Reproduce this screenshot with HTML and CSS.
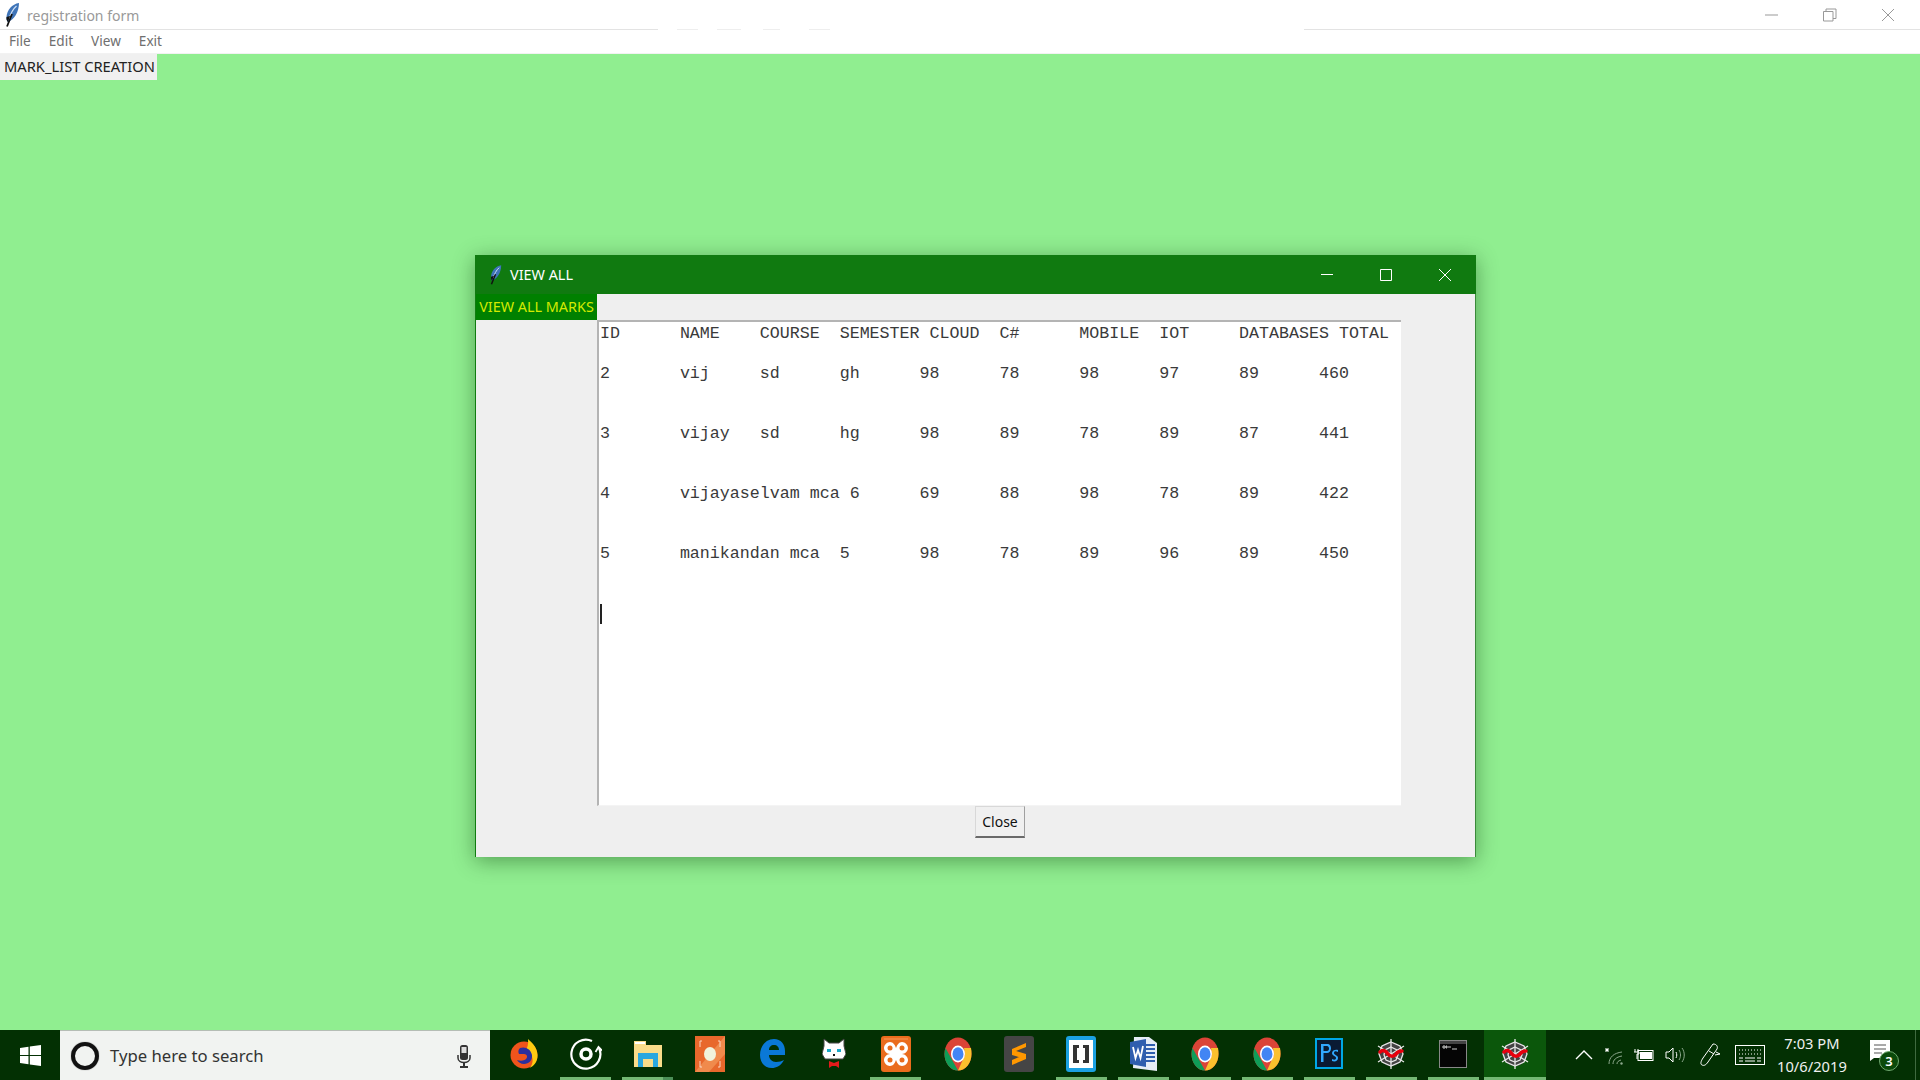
FILE: index.html
```html
<!DOCTYPE html>
<html lang="en">
<head>
<meta charset="utf-8">
<title>registration form</title>
<link rel="stylesheet" href="styles.css">
</head>
<body>
<svg class="defs" width="0" height="0" aria-hidden="true">
  <defs>
    <symbol id="feather" viewBox="0 0 16 24">
      <path d="M15 0C8 1 3 7 2.500 14c-.2 2 .2 3.500 1.200 5C10 17 15 9 15 0z" fill="#3f74b8"/>
      <path d="M12.500 3C9 6 6.500 11 5 16" stroke="#cfe0f5" stroke-width="1.200" fill="none"/>
      <path d="M8 11 3 23.500" stroke="#111" stroke-width="1.800" fill="none"/>
      <path d="M2.500 14c-.2 2 .2 3.500 1.200 5l2.500-6z" fill="#111"/>
    </symbol>
    <symbol id="chrome" viewBox="0 0 28 34">
      <ellipse cx="14" cy="17" rx="13.500" ry="16.500" fill="#db4437"/>
      <path d="M1.500 11 14 33.500c-7.500 0-13.500-7.500-13.500-16.500 0-2 .4-4 1-6z" fill="#0f9d58"/>
      <path d="M27 11c.4 2 .5 4 .5 6 0 9-6 16.500-13.500 16.500L21 18l-1-7z" fill="#fbc02d"/>
      <ellipse cx="14" cy="17" rx="7" ry="8.500" fill="#fff"/>
      <ellipse cx="14" cy="17" rx="5.500" ry="6.800" fill="#4285f4"/>
    </symbol>
    <symbol id="spider" viewBox="0 0 30 32">
      <circle cx="15" cy="16" r="12" fill="#444"/>
      <g stroke="#e8e8e8" stroke-width="1.300" fill="none">
        <path d="M15 1v30M2 8l26 16M28 8 2 24"/>
        <path d="M15 4l9 4 3 8-3 8-9 4-9-4-3-8 3-8z"/>
        <path d="M15 9l6 3 1 5-2 5-5 2-5-2-2-5 1-5z"/>
      </g>
      <path d="M4 14c3-3 6-1 8 2s6 3 8 0 4-3 6-3" stroke="#e8000d" stroke-width="3.500" fill="none" stroke-linecap="round"/>
    </symbol>
  </defs>
</svg>

<div class="app-title">
  <svg class="app-feather"><use href="#feather"/></svg>
  <span class="app-name">registration form</span>
  <div class="app-controls">
    <svg class="ctl" viewBox="0 0 14 14"><path d="M0 7h13" stroke="#999" fill="none"/></svg>
    <svg class="ctl" viewBox="0 0 14 14"><path d="M.5 3.500h9.500v9.500H.5zM3 3.500V1h10v9.500h-3" stroke="#999" fill="none"/></svg>
    <svg class="ctl" viewBox="0 0 14 14"><path d="M1 1l12 12M13 1 1 13" stroke="#999" fill="none"/></svg>
  </div>
</div>
<nav class="menu">
  <span class="m-file">File</span><span class="m-edit">Edit</span><span class="m-view">View</span><span class="m-exit">Exit</span>
</nav>

<main class="desktop">
  <div class="main-label">MARK_LIST CREATION</div>

  <section class="window">
    <header class="win-title">
      <svg class="win-feather"><use href="#feather"/></svg>
      <span class="win-name">VIEW ALL</span>
      <div class="win-controls">
        <svg class="ctl" viewBox="0 0 14 14"><path d="M1 6.500h12" stroke="#fff" fill="none"/></svg>
        <svg class="ctl" viewBox="0 0 14 14"><path d="M1.500 1.500h11v11h-11z" stroke="#fff" fill="none"/></svg>
        <svg class="ctl" viewBox="0 0 14 14"><path d="M1 1l12 12M13 1 1 13" stroke="#fff" fill="none"/></svg>
      </div>
    </header>
    <div class="win-body">
      <div class="label-row"><div class="view-label">VIEW ALL MARKS</div></div>
      <div class="text-box">
<pre class="marks">ID      NAME    COURSE  SEMESTER CLOUD  C#      MOBILE  IOT     DATABASES TOTAL

2       vij     sd      gh      98      78      98      97      89      460


3       vijay   sd      hg      98      89      78      89      87      441


4       vijayaselvam mca 6      69      88      98      78      89      422


5       manikandan mca  5       98      78      89      96      89      450


<span class="caret"></span></pre>
      </div>
      <div class="btn-row"><button class="close-btn">Close</button></div>
    </div>
  </section>
</main>

<footer class="taskbar">
  <div class="start">
    <svg width="21" height="21" viewBox="0 0 21 21"><path d="M0 3l8.500-1.200V10H0zM9.800 1.600 21 0v10H9.800zM0 11h8.500v8.200L0 18zM9.800 11H21v10L9.800 19.400z" fill="#fff"/></svg>
  </div>
  <div class="search">
    <span class="cortana"></span>
    <span class="search-text">Type here to search</span>
    <svg class="mic" width="14" height="24" viewBox="0 0 14 24"><rect x="3" y="1" width="8" height="15" rx="2.500" fill="#333"/><rect x="4.500" y="3" width="5" height="6" fill="#ddd"/><path d="M1 11v3c0 3 3 4.500 6 4.500s6-1.500 6-4.500v-3" stroke="#333" stroke-width="1.500" fill="none"/><path d="M7 18v4M3 23h8" stroke="#333" stroke-width="2"/></svg>
  </div>
  <div class="tasks">
    <div class="task">
      <svg width="28" height="32" viewBox="0 0 28 32"><circle cx="14" cy="17" r="13.500" fill="#f0541c"/><path d="M18 1c3 3 9 7 9.500 16 .3 6-3 11-8 13 4-4 4-10 1-14-1-2-3-3-5-3 2-3 3-7 2.500-12z" fill="#ffcb12"/><path d="M10 10c5-2 11 1 12 7 .7 5-3 9-8 9-3 0-6-2-7-4 3 1 7 1 9-1s1-5-2-5H9c-1-2-1-4 1-6z" fill="#2b2f9e"/></svg>
    </div>
    <div class="task on">
      <svg width="32" height="32" viewBox="0 0 32 32" fill="none" stroke="#fff"><path d="M29 10a14.500 14.500 0 1 1-7-7" stroke-width="2.200"/><path d="M25.500 14l3-5 3.500 3.500" stroke-width="1.800"/><circle cx="16" cy="16" r="5" stroke-width="3.500"/></svg>
    </div>
    <div class="task on stacked">
      <svg width="28" height="26" viewBox="0 0 28 26"><path d="M0 0h12v4h16v22H0z" fill="#f9dc8a"/><path d="M1 1h10v2H1z" fill="#fff"/><path d="M4 12h20v14h-5v-8H9v8H4z" fill="#2aa7e0"/></svg>
    </div>
    <div class="task">
      <svg width="30" height="36" viewBox="0 0 30 36"><rect width="30" height="36" fill="#e8682c"/><path d="M30 0 0 36h14L30 18z" fill="#f08a4c"/><ellipse cx="15" cy="18" rx="6" ry="7" fill="#f1f3dc"/><path d="M7 5H5v6M23 5h2v6M7 31H5v-6M23 31h2v-6" stroke="#f9d5c0" fill="none"/></svg>
    </div>
    <div class="task">
      <svg width="28" height="32" viewBox="0 0 28 32"><path d="M26 22c-3 6-8 8-12 8C7 30 2 25 2 17 2 8 8 1 16 1c7 0 11 5 11 12v4H11c0 4 3 7 7 7 3 0 6-1 8-2zM11 12h10c0-3-2-5-5-5s-5 2-5 5z" fill="#0a78d7"/></svg>
    </div>
    <div class="task">
      <svg width="24" height="32" viewBox="0 0 24 32"><path d="M2 8V1l5 4h10l5-4v7l2 8-3 5H3l-3-5z" fill="#fff" stroke="#444"/><path d="M5 11h4v3H5zM15 11h4v3h-4z" fill="#19a9c9"/><path d="M11 16h2v2h-2z" fill="#111"/><path d="M7 23l5 2 5-2v7l-3-2h-4l-3 2z" fill="#e21b1b"/></svg>
    </div>
    <div class="task on">
      <svg width="30" height="36" viewBox="0 0 30 36"><rect width="30" height="36" rx="3" fill="#ea6c1d"/><path d="M3 3h24" stroke="#f59a5d"/><path d="M9 6c3 0 5 3 6 6 1-3 3-6 6-6 3 0 6 3 6 6 0 3-3 6-6 6 3 0 6 3 6 6 0 3-3 6-6 6-3 0-5-3-6-6-1 3-3 6-6 6-3 0-6-3-6-6 0-3 3-6 6-6-3 0-6-3-6-6 0-3 3-6 6-6z" fill="#fff"/><circle cx="9" cy="12" r="2.500" fill="#ea6c1d"/><circle cx="21" cy="12" r="2.500" fill="#ea6c1d"/><circle cx="9" cy="24" r="2.500" fill="#ea6c1d"/><circle cx="21" cy="24" r="2.500" fill="#ea6c1d"/></svg>
    </div>
    <div class="task"><svg width="28" height="34"><use href="#chrome"/></svg></div>
    <div class="task">
      <svg width="30" height="36" viewBox="0 0 30 36"><rect width="30" height="36" rx="3" fill="#454545"/><path d="M22 7 8 13v6l14 4v-5L12 15l10-4zM8 29l14-6v-5L8 24z" fill="#ff9800"/></svg>
    </div>
    <div class="task on">
      <svg width="30" height="36" viewBox="0 0 30 36"><rect width="30" height="36" rx="3" fill="#1ba1e2"/><rect x="3" y="4" width="24" height="28" fill="#fff"/><path d="M7 9h6v3h-2v12h2v3H7zM23 9h-6v3h2v12h-2v3h6z" fill="#333"/></svg>
    </div>
    <div class="task on">
      <svg width="28" height="34" viewBox="0 0 28 34"><path d="M5 0h15l8 6v28L4 31z" fill="#e6edf6"/><path d="M1 5l16-3v28L1 27z" fill="#2f5eae"/><path d="M17 8h9M17 12h9M17 16h9M17 20h9M17 24h9" stroke="#2f5eae" stroke-width="2"/><path d="M4 10l2.500 11L9 13l2.500 8L14 9" stroke="#fff" stroke-width="1.800" fill="none"/></svg>
    </div>
    <div class="task on"><svg width="28" height="34"><use href="#chrome"/></svg></div>
    <div class="task on"><svg width="28" height="34"><use href="#chrome"/></svg></div>
    <div class="task on">
      <svg width="28" height="31" viewBox="0 0 28 31"><rect width="28" height="31" fill="#00a8e6"/><rect x="2" y="2" width="24" height="27" fill="#0a1a33"/><path d="M6 6h6c3 0 4 2 4 4.500S14 15 12 15H8.500v9H6zM8.500 8v5H12c1.500 0 2-1 2-2.500S13 8 12 8z" fill="#31a8ff"/><path d="M23 14c-2-1-4-1-4 1s4 2 4 5-3 4-6 3v-2c2 1 4 1 4-1s-4-2-4-5 4-4 6-3z" fill="#31a8ff"/></svg>
    </div>
    <div class="task on"><svg width="30" height="32"><use href="#spider"/></svg></div>
    <div class="task on">
      <svg width="28" height="28" viewBox="0 0 28 28"><rect width="28" height="28" fill="#888"/><rect x="1" y="1" width="26" height="26" fill="#444"/><rect x="1" y="4" width="26" height="23" fill="#050505"/><path d="M4 6h2v2H4zM7 6h1v2H7zM9 7h3M13 9h5" stroke="#ccc" fill="none"/></svg>
    </div>
    <div class="task active"><svg width="30" height="32"><use href="#spider"/></svg></div>
  </div>
  <div class="tray">
    <svg class="t-chev" width="18" height="10" viewBox="0 0 18 10"><path d="M1 9l8-8 8 8" stroke="#fff" stroke-width="1.400" fill="none"/></svg>
    <svg class="t-wifi" width="20" height="20" viewBox="0 0 20 20" fill="none"><path d="M1 5h4M3 3v4M1.500 3.500l3 3M4.500 3.500l-3 3" stroke="#fff"/><path d="M5 19C5 12 10 8 18 7M9 19c0-4 3-7 9-8M13 19c0-2 1-3 4-4" stroke="#8da88d"/><circle cx="17.500" cy="18.500" r="1.200" fill="#8da88d"/></svg>
    <svg class="t-batt" width="20" height="14" viewBox="0 0 20 14" fill="none"><path d="M1 1v3M4 1v3M0 4h5v2H3v5" stroke="#fff"/><rect x="4" y="2.500" width="15" height="10" stroke="#fff"/><rect x="6" y="4" width="12" height="7" fill="#fff"/></svg>
    <svg class="t-vol" width="20" height="18" viewBox="0 0 20 18" fill="none"><path d="M1 6h3l4-4v14l-4-4H1z" stroke="#fff"/><path d="M11 6c1 2 1 4 0 6" stroke="#fff"/><path d="M14 4c2 3 2 7 0 10M17 2c3 4 3 10 0 14" stroke="#8da88d"/></svg>
    <svg class="t-pen" width="22" height="24" viewBox="0 0 22 24" fill="none" stroke="#fff"><path d="M14 1 4 15c-2 3-3 6-1 7 2 1 4 0 6-3L18 6c1-2 0-5-4-5z"/><path d="M17 9l4 2-5 1M10 8l5 3"/></svg>
    <svg class="t-key" width="30" height="20" viewBox="0 0 30 20" fill="none" stroke="#fff"><rect x=".5" y=".5" width="29" height="19"/><path d="M4 5h22M4 9h22" stroke-dasharray="1 2"/><path d="M4 13h4M10 13h10M22 13h4M4 16h4M10 16h10M22 16h4"/></svg>
    <div class="clock"><span>7:03 PM</span><span>10/6/2019</span></div>
    <div class="notif">
      <svg width="20" height="22" viewBox="0 0 20 22"><path d="M0 0h20v18H4l-4 3z" fill="#fff"/><path d="M4 5h12M4 9h12M4 13h8" stroke="#555" stroke-width="1.200"/></svg>
      <span class="badge">3</span>
    </div>
  </div>
</footer>
</body>
</html>
```

FILE: styles.css
```css
* { box-sizing: border-box; }
html, body { height: 100%; }
body {
  margin: 0;
  display: flex;
  flex-direction: column;
  height: 1080px;
  overflow: hidden;
  background: #fff;
  font-family: "Noto Sans", "Open Sans", sans-serif;
}
.defs { display: block; height: 0; }

.app-title {
  height: 30px;
  flex: none;
  display: flex;
  align-items: center;
  background: #fff;
  padding-left: 4px;
  position: relative;
}
.app-title::after {
  content: "";
  position: absolute;
  left: 0;
  right: 0;
  bottom: 0;
  height: 1px;
  background: linear-gradient(to right,
    #e3e3e3 658px, #fff 658px,
    #fff 677px, #eee 677px, #eee 698px, #fff 698px,
    #fff 717px, #eee 717px, #eee 741px, #fff 741px,
    #fff 763px, #eee 763px, #eee 780px, #fff 780px,
    #fff 809px, #eee 809px, #eee 830px, #fff 830px,
    #fff 1304px, #e3e3e3 1304px);
}
.app-feather { width: 16px; height: 24px; }
.app-name { margin-left: 7px; font-size: 14px; color: #999; }
.app-controls {
  margin-left: auto;
  display: flex;
  gap: 44px;
  padding-right: 25px;
}
.ctl { width: 14px; height: 14px; display: block; }

.menu {
  height: 24px;
  flex: none;
  display: flex;
  align-items: center;
  background: #fff;
  font-size: 13.6px;
  color: #6f6f6f;
  padding-bottom: 2px;
  border-bottom: 1px solid #f2f2f2;
}
.m-file { margin-left: 9px; }
.m-edit { margin-left: 18px; }
.m-view { margin-left: 18px; }
.m-exit { margin-left: 18px; }

.desktop {
  flex: 1;
  position: relative;
  background: #90ee90;
}
.main-label {
  width: 157px;
  height: 26px;
  background: #f0f0f0;
  font-size: 14.7px;
  line-height: 25px;
  padding-left: 4px;
  color: #222;
  white-space: nowrap;
}

.window {
  position: absolute;
  left: 475px;
  top: 201px;
  width: 1001px;
  height: 602px;
  display: flex;
  flex-direction: column;
  background: #efefef;
  box-shadow: 0 4px 20px rgba(0, 50, 0, .42);
}
.win-title {
  height: 39px;
  flex: none;
  display: flex;
  align-items: center;
  background: #107a10;
  color: #fff;
  padding-left: 14px;
}
.win-feather { width: 13px; height: 20px; }
.win-name { margin-left: 8px; font-size: 14.4px; }
.win-controls {
  margin-left: auto;
  display: flex;
  gap: 45px;
  padding-right: 24px;
}
.win-body {
  flex: 1;
  display: flex;
  flex-direction: column;
  border-left: 1px solid #107c10;
  border-right: 1px solid #3a8a3a;
}
.label-row { height: 26px; flex: none; }
.view-label {
  width: 121px;
  height: 26px;
  background: #008000;
  color: #d4ea00;
  font-size: 14.4px;
  line-height: 25px;
  text-align: center;
  white-space: nowrap;
}
.text-box {
  height: 486px;
  flex: none;
  margin-left: 121px;
  width: 804px;
  background: #fff;
  border-top: 2px solid #b4b4b4;
  border-left: 2px solid #b4b4b4;
  border-bottom: 1px solid #f4f4f4;
  padding: 2px 0 0 1px;
  overflow: hidden;
}
.marks {
  margin: 0;
  font-family: "Liberation Mono", "Courier New", monospace;
  font-size: 16.65px;
  line-height: 20px;
  color: #3a3a3a;
}
.caret {
  display: inline-block;
  width: 2px;
  height: 20px;
  background: #222;
  vertical-align: top;
}
.btn-row {
  margin-left: 122px;
  width: 804px;
  display: flex;
  justify-content: center;
}
.close-btn {
  width: 50px;
  height: 32px;
  padding: 0;
  background: #f0f0f0;
  border: 1px solid #d8d8d8;
  border-right-color: #a0a0a0;
  border-bottom: 2px solid #6a6a6a;
  font-family: "Noto Sans", sans-serif;
  font-size: 14px;
  color: #111;
}

.taskbar {
  height: 50px;
  flex: none;
  display: flex;
  background: #033003;
}
.start {
  width: 60px;
  flex: none;
  display: flex;
  align-items: center;
  justify-content: center;
}
.search {
  width: 430px;
  flex: none;
  display: flex;
  align-items: center;
  background: #f1f3f1;
  border-top: 1px solid #b5bdb5;
  padding-left: 11px;
}
.cortana {
  width: 28px;
  height: 28px;
  border-radius: 50%;
  border: 4px solid #111;
  box-shadow: 0 0 1px #555;
}
.search-text {
  margin-left: 11px;
  font-size: 16.7px;
  color: #333;
}
.mic { margin-left: auto; margin-right: 19px; }

.tasks {
  display: flex;
  flex: none;
  padding-left: 3px;
}
.task {
  width: 61.94px;
  height: 50px;
  flex: none;
  display: flex;
  align-items: center;
  justify-content: center;
  position: relative;
  padding-bottom: 3px;
}
.task.on::after,
.task.active::after {
  content: "";
  position: absolute;
  left: 5.500px;
  bottom: 0;
  width: 51px;
  height: 3px;
  background: #74b874;
}
.task.stacked::after {
  background: linear-gradient(to right, #74b874 41px, #4c8f57 41px);
}
.task.active { background: #0b570b; }
.task.active::after { left: 0; width: 100%; }

.tray {
  flex: 1;
  position: relative;
  display: flex;
  align-items: center;
  color: #fff;
  padding-left: 29px;
}
.tray::after {
  content: "";
  position: absolute;
  right: 4px;
  top: 0;
  bottom: 0;
  width: 1px;
  background: #3f6a3f;
}
.tray svg { flex: none; }
.t-wifi { margin-left: 11px; }
.t-batt { margin-left: 10px; }
.t-vol { margin-left: 11px; }
.t-pen { margin-left: 14px; }
.t-key { margin-left: 14px; }
.clock {
  width: 100px;
  margin-left: -3px;
  display: flex;
  flex-direction: column;
  align-items: center;
  font-size: 14.7px;
  line-height: 23px;
  color: #f0f0f0;
}
.notif {
  position: relative;
  margin-left: 8px;
  width: 30px;
  height: 30px;
}
.badge {
  position: absolute;
  left: 9px;
  top: 11px;
  width: 20px;
  height: 20px;
  border-radius: 50%;
  background: #0b4a0b;
  border: 1px solid #6fa86f;
  font-size: 13px;
  font-weight: 600;
  line-height: 18px;
  text-align: center;
}
```
